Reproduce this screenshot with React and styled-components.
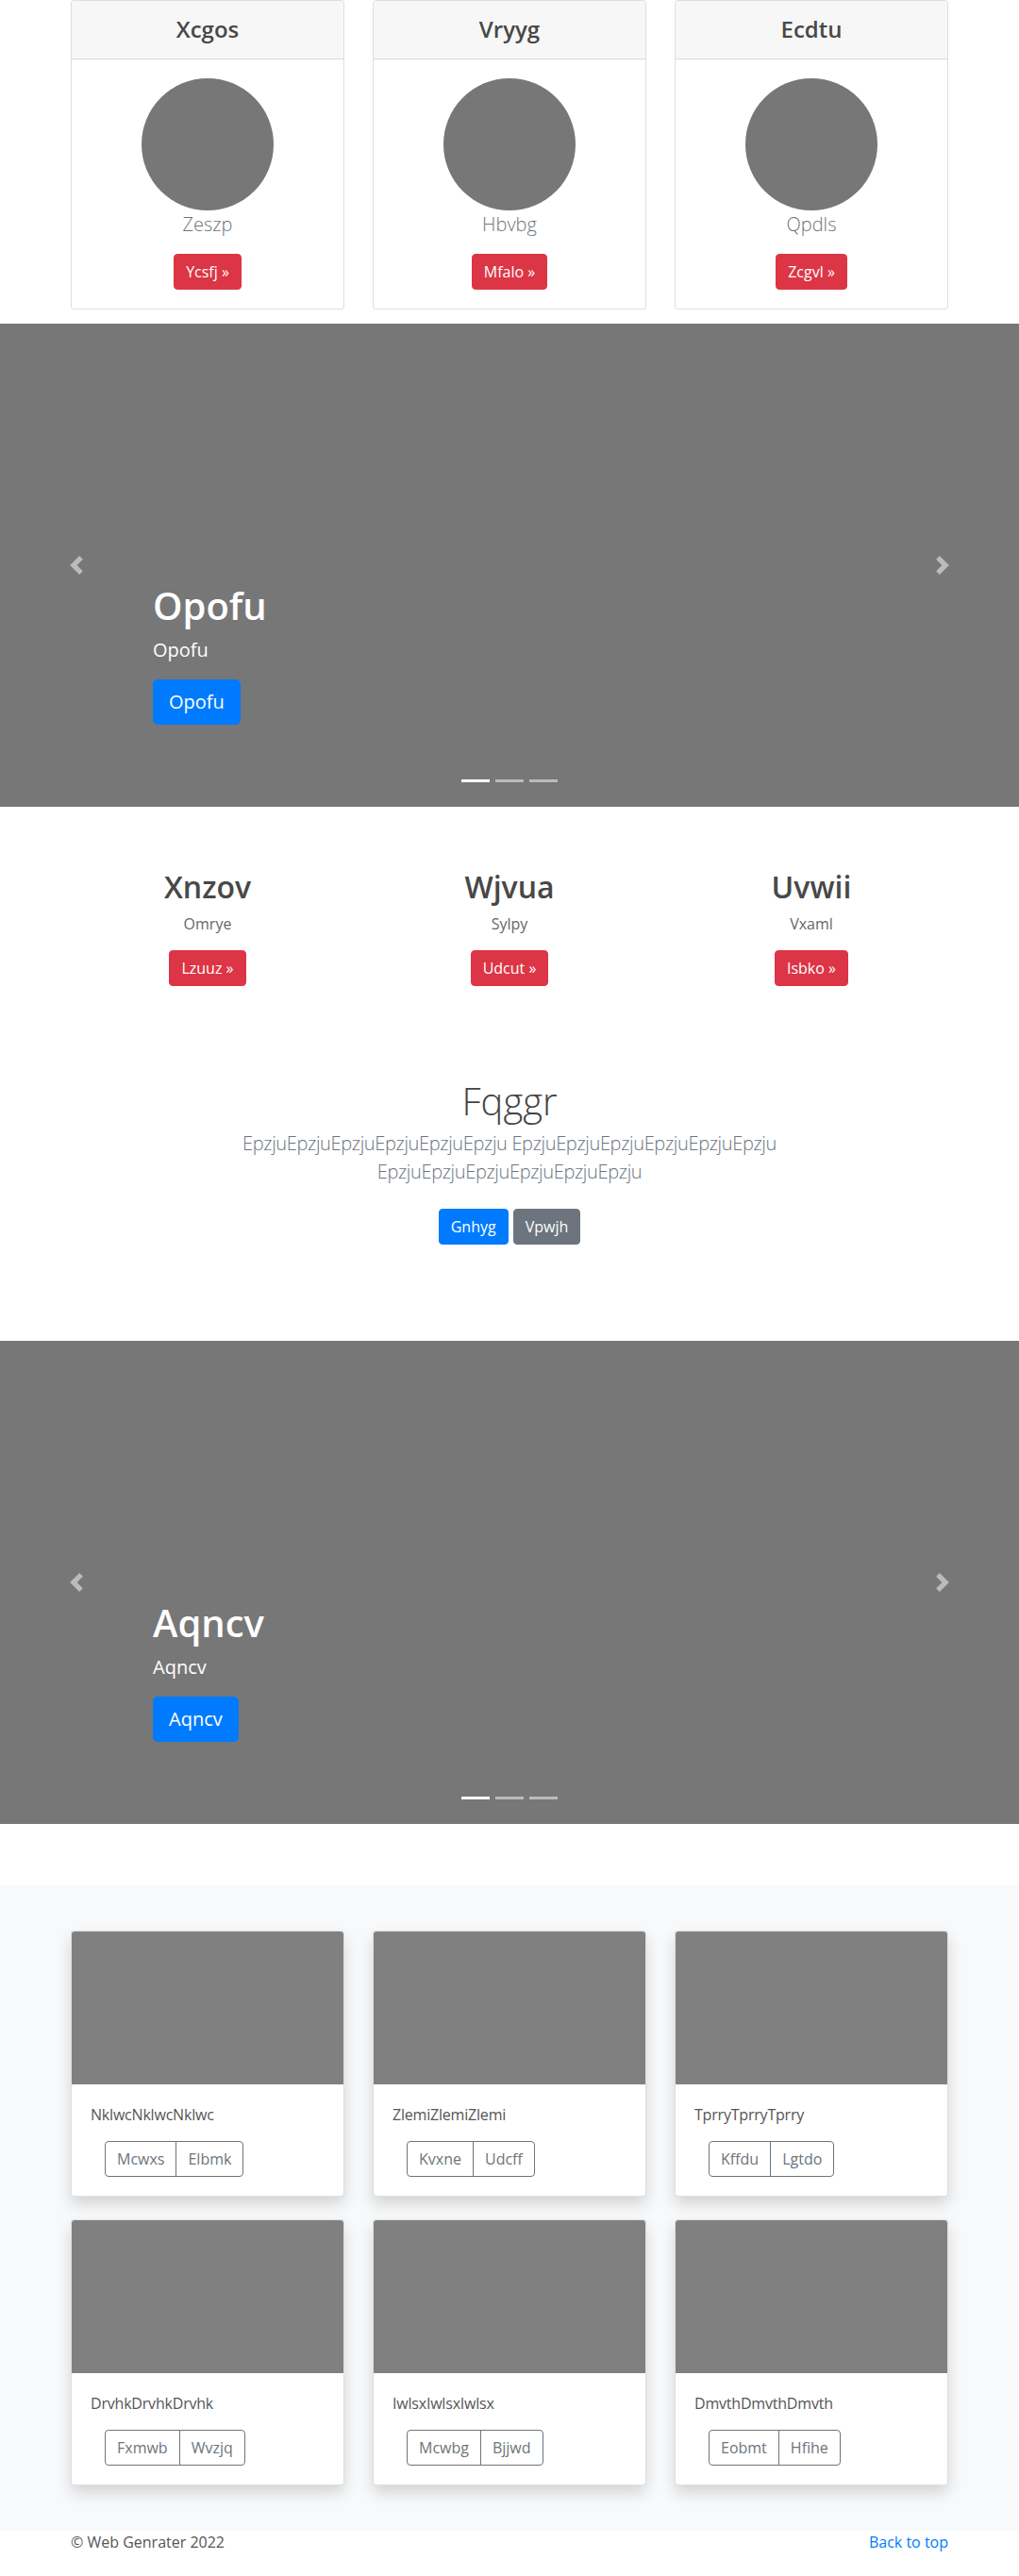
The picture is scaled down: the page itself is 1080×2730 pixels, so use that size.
import React from "react";
import styled, { createGlobalStyle } from "styled-components";

const GlobalStyle = createGlobalStyle`
  html, body { margin: 0; padding: 0; background: #fff; }
  body {
    font-family: "Open Sans", "Noto Sans", Roboto, sans-serif;
    font-size: 16px;
    line-height: 1.5;
    color: #555;
  }
  * { box-sizing: border-box; }
`;

const Page = styled.div`
  width: 100%;
`;

const Container = styled.div`
  max-width: 960px;
  margin: 0 auto;
  padding: 0 15px;
`;

const Grid3 = styled.div`
  display: grid;
  grid-template-columns: repeat(3, 1fr);
  column-gap: 30px;
`;

/* ---------- top profile cards ---------- */
const ProfileCard = styled.div`
  border: 1px solid rgba(0, 0, 0, 0.125);
  border-radius: 4px;
  text-align: center;
  background: #fff;
  overflow: hidden;
`;

const CardHeader = styled.div`
  background: #f7f7f7;
  border-bottom: 1px solid rgba(0, 0, 0, 0.125);
  padding: 12px 20px 13px;
`;

const CardTitle = styled.h4`
  margin: 0;
  font-size: 24px;
  font-weight: 600;
  line-height: 1.5;
  color: #484848;
`;

const ProfileBody = styled.div`
  padding: 20px;
  display: flex;
  flex-direction: column;
  align-items: center;
`;

const Avatar = styled.div`
  width: 140px;
  height: 140px;
  border-radius: 50%;
  background: #777;
`;

const MutedName = styled.p`
  margin: 0 0 16px;
  font-size: 20px;
  font-weight: 300;
  line-height: 1.5;
  color: #6c757d;
`;

const Btn = styled.a`
  display: inline-block;
  font-size: ${(p) => (p.$lg ? 20 : 16)}px;
  line-height: 1.5;
  padding: ${(p) => (p.$lg ? "8px 16px" : "6px 12px")};
  border: 1px solid ${(p) => p.$color};
  border-radius: ${(p) => (p.$lg ? 5 : 4)}px;
  background: ${(p) => p.$color};
  color: #fff;
  text-decoration: none;
  font-weight: 400;
  white-space: nowrap;
`;

/* ---------- carousel ---------- */
const Carousel = styled.div`
  position: relative;
  height: 512px;
  background: #777;
  margin-top: ${(p) => p.$mt || 0}px;
  margin-bottom: ${(p) => p.$mb || 64}px;
`;

const Caption = styled.div`
  position: absolute;
  left: 15%;
  right: 15%;
  bottom: 51px;
  padding: 20px 0;
  color: #fff;
  text-align: left;
`;

const CaptionTitle = styled.h1`
  margin: 0 0 8px;
  font-size: 40px;
  font-weight: 600;
  line-height: 1.2;
`;

const CaptionText = styled.p`
  margin: 0 0 16px;
  font-size: 20px;
  line-height: 1.5;
`;

const CaptionAction = styled.p`
  margin: 0 0 16px;
`;

const Control = styled.div`
  position: absolute;
  top: 0;
  bottom: 0;
  ${(p) => (p.$side === "left" ? "left: 0;" : "right: 0;")}
  width: 15%;
  display: flex;
  align-items: center;
  justify-content: center;
  opacity: 0.5;
`;

const Indicators = styled.ol`
  position: absolute;
  left: 0;
  right: 0;
  bottom: 26px;
  margin: 0;
  padding: 0;
  list-style: none;
  display: flex;
  justify-content: center;
  gap: 6px;
`;

const Indicator = styled.li`
  width: 30px;
  height: 3px;
  background: #fff;
  opacity: ${(p) => (p.$active ? 1 : 0.5)};
`;

const ChevronIcon = ({ dir }) => (
  <svg width="20" height="20" viewBox="0 0 8 8" fill="#fff">
    {dir === "left" ? (
      <path d="M5.25 0l-4 4 4 4 1.5-1.5L4.25 4l2.5-2.5L5.25 0z" />
    ) : (
      <path d="M2.75 0l-1.5 1.5L3.75 4l-2.5 2.5L2.75 8l4-4-4-4z" />
    )}
  </svg>
);

const Slide = ({ title, mt, mb }) => (
  <Carousel $mt={mt} $mb={mb}>
    <Indicators>
      <Indicator $active />
      <Indicator />
      <Indicator />
    </Indicators>
    <Caption>
      <CaptionTitle>{title}</CaptionTitle>
      <CaptionText>{title}</CaptionText>
      <CaptionAction>
        <Btn $lg $color="#007bff">{title}</Btn>
      </CaptionAction>
    </Caption>
    <Control $side="left">
      <ChevronIcon dir="left" />
    </Control>
    <Control $side="right">
      <ChevronIcon dir="right" />
    </Control>
  </Carousel>
);

/* ---------- marketing ---------- */
const MarketingCol = styled.div`
  text-align: center;
  padding-top: 2px;
`;

const MarketingTitle = styled.h2`
  margin: 0 0 8px;
  font-size: 32px;
  font-weight: 600;
  line-height: 1.2;
  color: #484848;
`;

const MarketingText = styled.p`
  margin: 0 0 16px;
  font-size: 16px;
  line-height: 1.5;
  color: #666;
`;

/* ---------- jumbotron ---------- */
const Jumbotron = styled.section`
  text-align: center;
  padding: 98px 15px 94px;
`;

const JumboInner = styled.div`
  max-width: 610px;
  margin: 0 auto;
`;

const JumboTitle = styled.h1`
  margin: 0 0 6px;
  font-size: 40px;
  font-weight: 300;
  line-height: 1.2;
  color: #444;
`;

const Lead = styled.p`
  margin: 0 0 16px;
  font-size: 20px;
  font-weight: 300;
  line-height: 1.5;
  letter-spacing: -0.35px;
  color: #6c757d;
`;

const JumboActions = styled.div`
  display: flex;
  justify-content: center;
  gap: 5px;
  padding: 8px 0;
`;

/* ---------- album ---------- */
const Album = styled.section`
  background: #f8f9fa;
  padding: 48px 0 24px;
`;

const AlbumCard = styled.div`
  background: #fff;
  border: 1px solid rgba(0, 0, 0, 0.125);
  border-radius: 4px;
  box-shadow: 0 8px 16px rgba(0, 0, 0, 0.15);
  overflow: hidden;
  margin-bottom: 24px;
`;

const Thumb = styled.div`
  height: 162px;
  background: #808080;
`;

const AlbumBody = styled.div`
  padding: 20px;
`;

const CardText = styled.p`
  margin: 0 0 16px;
  font-size: 16px;
  line-height: 1.5;
  color: #555;
  letter-spacing: -0.2px;
`;

const BtnGroup = styled.div`
  display: inline-flex;
  margin-left: 15px;
`;

const OutlineBtn = styled.button`
  font-family: inherit;
  font-size: 16px;
  line-height: 1.5;
  padding: 6px 12px;
  background: transparent;
  color: #6c757d;
  border: 1px solid #6c757d;
  border-radius: 0;
  &:first-child {
    border-radius: 4px 0 0 4px;
  }
  &:last-child {
    border-radius: 0 4px 4px 0;
    margin-left: -1px;
  }
`;

/* ---------- footer ---------- */
const Footer = styled.footer`
  padding: 0;
`;

const FooterRow = styled.div`
  display: flex;
  justify-content: space-between;
  align-items: center;
  font-size: 16px;
  line-height: 1.5;
  color: #555;
`;

const FooterLink = styled.a`
  color: #007bff;
  text-decoration: none;
`;

const profiles = [
  { title: "Xcgos", name: "Zeszp", btn: "Ycsfj" },
  { title: "Vryyg", name: "Hbvbg", btn: "Mfalo" },
  { title: "Ecdtu", name: "Qpdls", btn: "Zcgvl" },
];

const marketing = [
  { title: "Xnzov", text: "Omrye", btn: "Lzuuz" },
  { title: "Wjvua", text: "Sylpy", btn: "Udcut" },
  { title: "Uvwii", text: "Vxaml", btn: "Isbko" },
];

const albums = [
  { text: "NklwcNklwcNklwc", a: "Mcwxs", b: "Elbmk" },
  { text: "ZlemiZlemiZlemi", a: "Kvxne", b: "Udcff" },
  { text: "TprryTprryTprry", a: "Kffdu", b: "Lgtdo" },
  { text: "DrvhkDrvhkDrvhk", a: "Fxmwb", b: "Wvzjq" },
  { text: "IwlsxIwlsxIwlsx", a: "Mcwbg", b: "Bjjwd" },
  { text: "DmvthDmvthDmvth", a: "Eobmt", b: "Hfihe" },
];

export default function App() {
  return (
    <Page>
      <GlobalStyle />
      <Container>
        <Grid3>
          {profiles.map((p) => (
            <ProfileCard key={p.title}>
              <CardHeader>
                <CardTitle>{p.title}</CardTitle>
              </CardHeader>
              <ProfileBody>
                <Avatar />
                <MutedName>{p.name}</MutedName>
                <Btn $color="#dc3545">{p.btn} »</Btn>
              </ProfileBody>
            </ProfileCard>
          ))}
        </Grid3>
      </Container>

      <Slide title="Opofu" mt={15} mb={64} />

      <Container>
        <Grid3>
          {marketing.map((m) => (
            <MarketingCol key={m.title}>
              <MarketingTitle>{m.title}</MarketingTitle>
              <MarketingText>{m.text}</MarketingText>
              <Btn $color="#dc3545">{m.btn} »</Btn>
            </MarketingCol>
          ))}
        </Grid3>
      </Container>

      <Jumbotron>
        <JumboInner>
          <JumboTitle>Fqggr</JumboTitle>
          <Lead>
            EpzjuEpzjuEpzjuEpzjuEpzjuEpzju EpzjuEpzjuEpzjuEpzjuEpzjuEpzju
            EpzjuEpzjuEpzjuEpzjuEpzjuEpzju
          </Lead>
          <JumboActions>
            <Btn $color="#007bff">Gnhyg</Btn>
            <Btn $color="#6c757d">Vpwjh</Btn>
          </JumboActions>
        </JumboInner>
      </Jumbotron>

      <Slide title="Aqncv" mb={65} />

      <Album>
        <Container>
          <Grid3>
            {albums.map((a) => (
              <AlbumCard key={a.text}>
                <Thumb />
                <AlbumBody>
                  <CardText>{a.text}</CardText>
                  <BtnGroup>
                    <OutlineBtn>{a.a}</OutlineBtn>
                    <OutlineBtn>{a.b}</OutlineBtn>
                  </BtnGroup>
                </AlbumBody>
              </AlbumCard>
            ))}
          </Grid3>
        </Container>
      </Album>

      <Footer>
        <Container>
          <FooterRow>
            <span>© Web Genrater 2022</span>
            <FooterLink href="#">Back to top</FooterLink>
          </FooterRow>
        </Container>
      </Footer>
    </Page>
  );
}
